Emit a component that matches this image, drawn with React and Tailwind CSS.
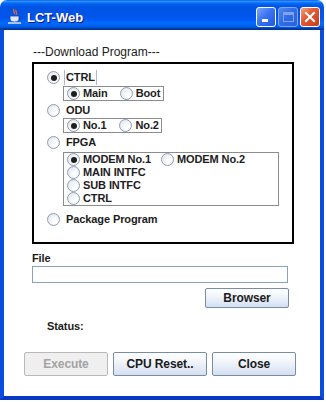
import React from "react";

const Radio = ({ checked }) => (
  <span className="flex h-[13px] w-[13px] shrink-0 items-center justify-center rounded-full border border-[#8e9db5] bg-[radial-gradient(circle_at_65%_65%,#ffffff_15%,#dfe4ec_90%)]">
    {checked && <span className="h-[6px] w-[6px] rounded-full bg-[#1e1e1e]" />}
  </span>
);

const Option = ({ checked, label, focus, className = "" }) => (
  <div className={`flex h-[13px] items-center ${className}`}>
    <Radio checked={checked} />
    <span
      className={`ml-[4px] flex h-[15px] items-center border-x pl-[1px] pr-[1px] ${
        focus ? "border-[#a9bbd9]" : "border-transparent"
      }`}
    >
      {label}
    </span>
  </div>
);

const SubOption = ({ checked, label }) => (
  <div className="flex h-[13px] items-center gap-[3px]">
    <Radio checked={checked} />
    <span>{label}</span>
  </div>
);

const TitleButton = ({ kind }) => {
  if (kind === "close") {
    return (
      <div className="flex h-[20px] w-[20px] items-center justify-center rounded-[3px] border border-white bg-[linear-gradient(135deg,#f2a083_0%,#e35c35_40%,#c9391a_100%)]">
        <svg width="12" height="12" viewBox="0 0 12 12">
          <path d="M2 2 L10 10 M10 2 L2 10" stroke="#fff" strokeWidth="2" strokeLinecap="square" />
        </svg>
      </div>
    );
  }
  if (kind === "max") {
    return (
      <div className="flex h-[20px] w-[20px] items-center justify-center rounded-[3px] border border-[#7ea4f0] bg-[linear-gradient(135deg,#4f86f2_0%,#2f6be6_50%,#2a62dc_100%)]">
        <div className="h-[10px] w-[11px] border border-t-[3px] border-[#7ea4f0]" />
      </div>
    );
  }
  return (
    <div className="flex h-[20px] w-[20px] items-end justify-start rounded-[3px] border border-white bg-[linear-gradient(135deg,#7aa7fb_0%,#3a74f0_45%,#2158e0_100%)] pb-[4px] pl-[5px]">
      <div className="h-[3px] w-[6px] bg-white" />
    </div>
  );
};

const JavaCup = () => (
  <svg width="16" height="17" viewBox="0 0 16 17">
    <path d="M7 1 C5 3 9 4 7 6 M9 2 C8 4 11 4 9 7" stroke="#e8642c" strokeWidth="1.3" fill="none" />
    <path d="M3 8 H12 V11 C12 13 10 14 7.5 14 C5 14 3 13 3 11 Z" fill="#dbe6f8" stroke="#22449a" strokeWidth="0.8" />
    <path d="M12 9 C14.5 9 14.5 12 12 12" stroke="#22449a" strokeWidth="1" fill="none" />
    <path d="M1 15 H14" stroke="#dbe6f8" strokeWidth="1.3" />
  </svg>
);

const Button = ({ label, width, disabled }) => (
  <div
    className={`flex h-[24px] items-center justify-center rounded-[2px] border ${width} ${
      disabled
        ? "border-[#b9b9b9] bg-[#efefef] text-[#a3a3a3]"
        : "border-[#7a8ba5] bg-[linear-gradient(to_bottom,#ffffff_0%,#f1f5fb_40%,#d3e0f1_100%)] text-[#1a1a1a]"
    }`}
  >
    {label}
  </div>
);

export default function App() {
  return (
    <div className="h-[402px] w-[326px] bg-white font-['Liberation_Sans',Arial,sans-serif] text-[11px] font-bold tracking-[-0.1px] text-[#1c1c1c]">
      <div className="flex h-[400px] w-[324px] flex-col overflow-hidden rounded-t-[7px]">
        {/* Title bar */}
        <div className="flex h-[30px] shrink-0 items-start bg-[linear-gradient(to_bottom,#0058ee_0%,#3593ff_4%,#288eff_6%,#127dff_8%,#036ffc_10%,#0262ee_14%,#0057e5_20%,#0054e3_24%,#0055eb_56%,#005bf5_66%,#026afe_76%,#0062ef_86%,#0052d6_92%,#0040ab_94%,#003092_100%)]">
          <div className="ml-[7px] mt-[8px]">
            <JavaCup />
          </div>
          <span className="ml-[4px] mt-[8px] text-[13px] font-bold tracking-normal text-white [text-shadow:1px_1px_#0f1089]">
            LCT-Web
          </span>
          <div className="ml-auto mr-[4px] mt-[7px] flex gap-[2px]">
            <TitleButton kind="min" />
            <TitleButton kind="max" />
            <TitleButton kind="close" />
          </div>
        </div>

        {/* Body */}
        <div className="flex flex-1 flex-col border-x-4 border-b-4 border-x-[#0a4ee0] border-b-[#0737c4] bg-white">
          <div className="ml-[29px] mt-[15px] h-[14px] text-[12px] font-normal leading-[14px] tracking-normal">
            ---Download Program---
          </div>

          <div className="ml-[28px] mt-[3px] flex h-[182px] w-[262px] flex-col border-2 border-black pl-[13px]">
            <Option checked focus label="CTRL" className="mt-[7px]" />
            <div className="ml-[16px] mt-[2px] flex h-[15px] w-[101px] items-center gap-[12px] border border-[#8c8c8c] pl-[3px]">
              <SubOption checked label="Main" />
              <SubOption label="Boot" />
            </div>

            <Option label="ODU" className="mt-[3px]" />
            <div className="ml-[16px] mt-[1px] flex h-[15px] w-[99px] items-center gap-[13px] border border-[#8c8c8c] pl-[3px]">
              <SubOption checked label="No.1" />
              <SubOption label="No.2" />
            </div>

            <Option label="FPGA" className="mt-[3px]" />
            <div className="ml-[16px] mt-[3px] flex w-[216px] flex-col border border-[#8c8c8c] pl-[3px]">
              <div className="flex">
                <div className="w-[94px]">
                  <SubOption checked label="MODEM No.1" />
                </div>
                <SubOption label="MODEM No.2" />
              </div>
              <SubOption label="MAIN INTFC" />
              <SubOption label="SUB INTFC" />
              <SubOption label="CTRL" />
            </div>

            <Option label="Package Program" className="mt-[7px]" />
          </div>

          <div className="ml-[28px] mt-[8px] flex h-[13px] items-center">File</div>
          <div className="ml-[28px] mt-[1px] h-[17px] w-[256px] border border-[#8aa0bb] bg-white" />
          <div className="ml-[201px] mt-[5px] flex h-[20px] w-[84px] items-center justify-center rounded-[2px] border border-[#7a8ba5] bg-[linear-gradient(to_bottom,#ffffff_0%,#f1f5fb_40%,#d3e0f1_100%)] text-[12px]">
            Browser
          </div>

          <div className="ml-[43px] mt-[12px] flex h-[13px] items-center">Status:</div>

          <div className="ml-[20px] mt-[19px] flex gap-[5px] text-[12px]">
            <Button label="Execute" width="w-[84px]" disabled />
            <Button label="CPU Reset.." width="w-[94px]" />
            <Button label="Close" width="w-[84px]" />
          </div>
        </div>
      </div>
    </div>
  );
}
